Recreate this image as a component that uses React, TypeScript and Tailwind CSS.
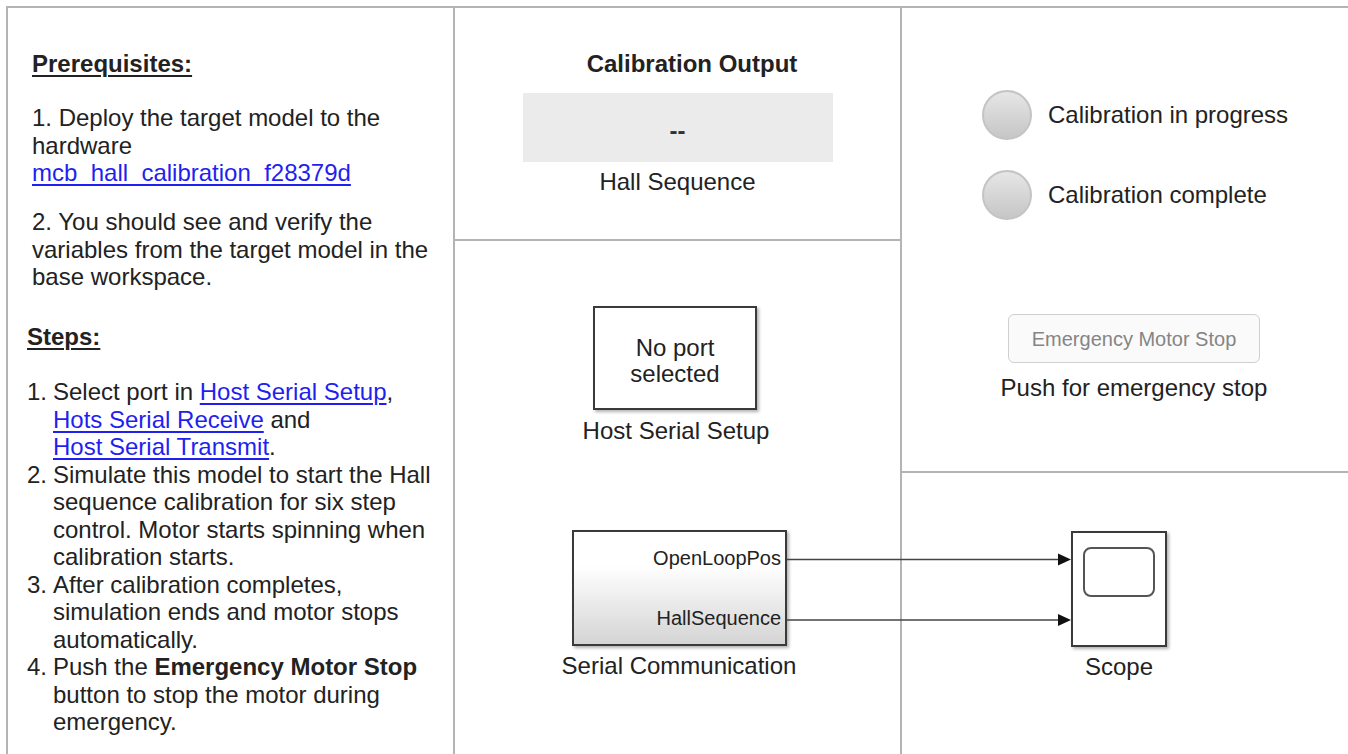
import React from "react";

const font = { fontFamily: '"Liberation Sans", Arial, Helvetica, sans-serif' };

function Link({ children }: { children: React.ReactNode }) {
  return <span className="text-[#1f1ff0] underline decoration-[1.5px] underline-offset-[3px]">{children}</span>;
}

function Step({ n, children }: { n: string; children: React.ReactNode }) {
  return (
    <div className="flex">
      <div className="w-[26px] shrink-0">{n}</div>
      <div className="whitespace-nowrap">{children}</div>
    </div>
  );
}

export default function App() {
  return (
    <div
      className="relative w-[1348px] h-[754px] overflow-hidden bg-white pt-[6px] pl-[6px] text-[#222]"
      style={font}
    >
      <div className="flex h-[760px]">
        {/* Left column */}
        <div className="w-[449px] shrink-0 border-l-2 border-t-2 border-r-2 border-[#b4b4b4] text-[24px] leading-[27.5px]">
          <div className="pl-[24px] pt-[42px]">
            <div className="font-bold underline decoration-[2px] underline-offset-[3px]">Prerequisites:</div>
            <div className="mt-[26.5px] whitespace-nowrap">
              1. Deploy the target model to the
              <br />
              hardware
              <br />
              <Link>mcb_hall_calibration_f28379d</Link>
            </div>
            <div className="mt-[21.5px] whitespace-nowrap">
              2. You should see and verify the
              <br />
              variables from the target model in the
              <br />
              base workspace.
            </div>
          </div>
          <div className="pl-[19px] mt-[32.5px]">
            <div className="font-bold underline decoration-[2px] underline-offset-[3px]">Steps:</div>
            <div className="mt-[27.5px]">
              <Step n="1.">
                Select port in <Link>Host Serial Setup</Link>,
                <br />
                <Link>Hots Serial Receive</Link> and
                <br />
                <Link>Host Serial Transmit</Link>.
              </Step>
              <Step n="2.">
                Simulate this model to start the Hall
                <br />
                sequence calibration for six step
                <br />
                control. Motor starts spinning when
                <br />
                calibration starts.
              </Step>
              <Step n="3.">
                After calibration completes,
                <br />
                simulation ends and motor stops
                <br />
                automatically.
              </Step>
              <Step n="4.">
                Push the <span className="font-bold">Emergency Motor Stop</span>
                <br />
                button to stop the motor during
                <br />
                emergency.
              </Step>
            </div>
          </div>
        </div>

        {/* Middle column */}
        <div className="w-[447px] shrink-0 border-t-2 border-r-2 border-[#b4b4b4] flex flex-col text-[24px] leading-[28px]">
          <div className="h-[233px] border-b-2 border-[#b4b4b4] flex flex-col items-center pt-[42px]">
            <div className="pl-[29px] font-bold whitespace-nowrap">Calibration Output</div>
            <div className="mt-[15px] w-[310px] h-[69px] bg-[#ebebeb] flex items-center justify-center pt-[6px] text-[#333] font-bold">
              --
            </div>
            <div className="mt-[6px] whitespace-nowrap">Hall Sequence</div>
          </div>
          <div className="flex flex-col items-center">
            <div className="mt-[65px] mr-[5px] w-[164px] h-[104px] border-2 border-[#3a3a3a] bg-white shadow-[2px_2px_3px_rgba(0,0,0,0.3)] flex items-center justify-center text-center leading-[26px] pt-[5px]">
              No port
              <br />
              selected
            </div>
            <div className="mt-[7px] mr-[3px] whitespace-nowrap">Host Serial Setup</div>
            <div className="mt-[85px] ml-[4px] w-[215px] h-[116px] border-2 border-[#3a3a3a] shadow-[2px_2px_3px_rgba(0,0,0,0.3)] bg-[linear-gradient(to_bottom,#ffffff_30%,#d4d4d4)] flex flex-col items-end pr-[4px] pt-[14px] text-[20px] leading-[24px]">
              <div>OpenLoopPos</div>
              <div className="mt-[36px]">HallSequence</div>
            </div>
            <div className="mt-[6px] ml-[3px] whitespace-nowrap">Serial Communication</div>
          </div>
        </div>

        {/* Right column */}
        <div className="flex-1 border-t-2 border-[#b4b4b4] flex flex-col text-[24px] leading-[28px]">
          <div className="h-[465px] border-b-2 border-[#b4b4b4] pl-[80px] pt-[82px]">
            <div className="flex items-center gap-[16px]">
              <div className="w-[50px] h-[50px] rounded-full border-2 border-[#c4c4c4] bg-[linear-gradient(to_bottom,#e6e6e6,#c6c6c6)]" />
              <div className="whitespace-nowrap">Calibration in progress</div>
            </div>
            <div className="mt-[30px] flex items-center gap-[16px]">
              <div className="w-[50px] h-[50px] rounded-full border-2 border-[#c4c4c4] bg-[linear-gradient(to_bottom,#e6e6e6,#c6c6c6)]" />
              <div className="whitespace-nowrap">Calibration complete</div>
            </div>
            <div className="ml-[26px] mt-[94px] w-[252px] flex flex-col items-center">
              <div className="w-[252px] h-[49px] rounded-[6px] border-[1.5px] border-[#cfcfcf] bg-[#fafafa] flex items-center justify-center text-[20px] text-[#858585] whitespace-nowrap">
                Emergency Motor Stop
              </div>
              <div className="mt-[11px] whitespace-nowrap">Push for emergency stop</div>
            </div>
          </div>
          <div className="pl-[169px] pt-[58px]">
            <div className="w-[96px] flex flex-col items-center">
              <div className="w-[96px] h-[116px] border-2 border-[#3a3a3a] bg-white shadow-[2px_2px_3px_rgba(0,0,0,0.3)] pl-[10px] pt-[14px]">
                <div className="w-[72px] h-[50px] rounded-[8px] border-2 border-[#555]" />
              </div>
              <div className="mt-[6px] whitespace-nowrap">Scope</div>
            </div>
          </div>
        </div>
      </div>

      {/* Signal wires */}
      <svg className="absolute left-0 top-0 pointer-events-none" width="1348" height="754">
        <line x1="787" y1="559.5" x2="1060" y2="559.5" stroke="#444" strokeWidth="1.5" />
        <polygon points="1058,553.5 1071,559.5 1058,565.5" fill="#111" />
        <line x1="787" y1="620" x2="1060" y2="620" stroke="#444" strokeWidth="1.5" />
        <polygon points="1058,614 1071,620 1058,626" fill="#111" />
      </svg>
    </div>
  );
}
